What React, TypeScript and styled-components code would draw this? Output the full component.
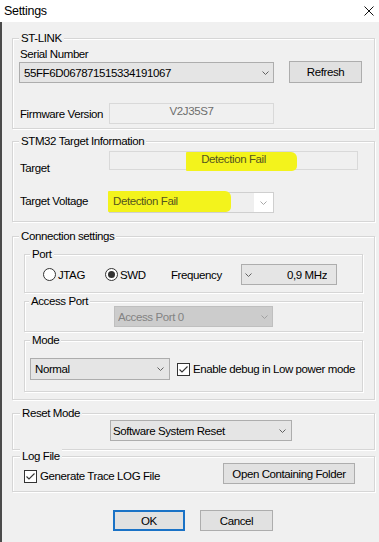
import React from "react";
import styled, { createGlobalStyle } from "styled-components";

const Global = createGlobalStyle`
  html, body { margin: 0; padding: 0; background: #f0f0f0; }
  body {
    font-family: "Liberation Sans", Arial, sans-serif;
    font-size: 11.5px;
    letter-spacing: -0.4px;
    color: #000;
  }
  * { box-sizing: border-box; }
`;

const Window = styled.div`
  width: 379px;
  height: 542px;
  background: #f0f0f0;
  display: flex;
  flex-direction: column;
  overflow: hidden;
`;

const TitleBar = styled.div`
  height: 22px;
  flex: none;
  background: #fff;
  display: flex;
  align-items: center;
  justify-content: space-between;
  padding: 0 5px 0 4px;
`;

const TitleText = styled.span`
  font-size: 12.5px;
  letter-spacing: -0.3px;
  line-height: 14px;
`;

const Body = styled.div`
  flex: 1;
  border-left: 2px solid #4b4b4b;
  padding-left: 10px;
  display: flex;
  flex-direction: column;
  align-items: flex-start;
`;

const Group = styled.div<{ $mt: number; $pl?: number; $pr?: number; $pb: number; $w?: number }>`
  margin-top: ${(p) => p.$mt}px;
  width: ${(p) => p.$w ?? 363}px;
  flex: none;
  border: 1px solid #d6d6d6;
  box-shadow: inset 1px 1px 0 #fff, 1px 1px 0 #fff;
  padding: 0 ${(p) => p.$pr ?? 0}px ${(p) => p.$pb}px ${(p) => p.$pl ?? 0}px;
  display: flex;
  flex-direction: column;
  align-items: flex-start;
`;

const Legend = styled.div<{ $ml: number }>`
  margin: -8px 0 0 ${(p) => p.$ml}px;
  padding: 0 2px;
  background: #f0f0f0;
  line-height: 14px;
  height: 14px;
  white-space: nowrap;
`;

const Row = styled.div<{ $mt?: number; $ml?: number; $align?: string; $stretch?: boolean }>`
  display: flex;
  align-items: ${(p) => p.$align ?? "flex-start"};
  margin-top: ${(p) => p.$mt ?? 0}px;
  margin-left: ${(p) => p.$ml ?? 0}px;
  align-self: ${(p) => (p.$stretch ? "stretch" : "auto")};
`;

const Label = styled.span<{ $w?: number; $mt?: number; $pl?: number }>`
  ${(p) => (p.$w ? `width: ${p.$w}px;` : "")}
  margin-top: ${(p) => p.$mt ?? 0}px;
  padding-left: ${(p) => p.$pl ?? 0}px;
  line-height: 14px;
  height: 14px;
  white-space: nowrap;
  flex: none;
`;

const Combo = styled.div<{
  $w: number;
  $h: number;
  $mt?: number;
  $ml?: number;
  $pl?: number;
  $pr?: number;
  $disabled?: boolean;
}>`
  width: ${(p) => p.$w}px;
  height: ${(p) => p.$h}px;
  margin-top: ${(p) => p.$mt ?? 0}px;
  margin-left: ${(p) => p.$ml ?? 0}px;
  flex: none;
  display: flex;
  align-items: center;
  padding: 0 ${(p) => p.$pr ?? 4}px 0 ${(p) => p.$pl ?? 4}px;
  background: ${(p) => (p.$disabled ? "#cccccc" : "#e5e5e5")};
  border: 1px solid ${(p) => (p.$disabled ? "#bfbfbf" : "#adadad")};
  color: ${(p) => (p.$disabled ? "#838383" : "#000")};
`;

const ComboText = styled.span<{ $right?: boolean }>`
  flex: 1;
  white-space: nowrap;
  overflow: hidden;
  line-height: 14px;
  text-align: ${(p) => (p.$right ? "right" : "left")};
`;

const ChevronSvg = styled.svg`
  flex: none;
  display: block;
`;

const Chevron = ({ color = "#606060" }: { color?: string }) => (
  <ChevronSvg width="7" height="4" viewBox="0 0 7 4">
    <polyline points="0.5,0.5 3.5,3.5 6.5,0.5" fill="none" stroke={color} strokeWidth="1" />
  </ChevronSvg>
);

const Button = styled.button<{ $w: number; $h: number; $ml?: number | "auto"; $default?: boolean }>`
  width: ${(p) => p.$w}px;
  height: ${(p) => p.$h}px;
  margin-left: ${(p) => (p.$ml === "auto" ? "auto" : `${p.$ml ?? 0}px`)};
  flex: none;
  font: inherit;
  letter-spacing: inherit;
  line-height: 14px;
  color: #000;
  background: #e1e1e1;
  border: ${(p) => (p.$default ? "2px solid #1a72c6" : "1px solid #adadad")};
  padding: 0;
  border-radius: 0;
`;

const Field = styled.div<{ $w: number; $h: number }>`
  position: relative;
  width: ${(p) => p.$w}px;
  height: ${(p) => p.$h}px;
  flex: none;
  border: 1px solid #d9d9d9;
  background: #f0f0f0;
  color: #6d6d6d;
  display: flex;
  align-items: flex-start;
  justify-content: center;
  line-height: 14px;
`;

const FieldText = styled.span<{ $marked?: boolean }>`
  position: relative;
  z-index: 1;
  white-space: nowrap;
  color: ${(p) => (p.$marked ? "#55551f" : "#6d6d6d")};
`;

const Marker = styled.span<{ $left: number; $top: number; $w: number; $h: number }>`
  position: absolute;
  left: ${(p) => p.$left}px;
  top: ${(p) => p.$top}px;
  width: ${(p) => p.$w}px;
  height: ${(p) => p.$h}px;
  background: #f3f31c;
  border-radius: 1px 6px 5px 1px;
  padding: 3px 0 0 5px;
  line-height: 14px;
  color: #55551f;
  white-space: nowrap;
  z-index: 1;
`;

const EditCombo = styled.div`
  position: relative;
  width: 165px;
  height: 21px;
  flex: none;
  border: 1px solid #cfcfcf;
  background: #fff;
  display: flex;
`;

const EditArea = styled.div`
  flex: 1;
  background: #efefef;
`;

const DropArea = styled.div`
  width: 19px;
  display: flex;
  align-items: center;
  justify-content: center;
  background: #fff;
`;

const RadioItem = styled.label<{ $w: number }>`
  width: ${(p) => p.$w}px;
  flex: none;
  display: flex;
  align-items: center;
  gap: 2px;
  line-height: 14px;
  white-space: nowrap;
`;

const RadioCircle = styled.span<{ $checked?: boolean }>`
  width: 13px;
  height: 13px;
  flex: none;
  border-radius: 50%;
  border: 1px solid #333;
  background: #fff;
  display: flex;
  align-items: center;
  justify-content: center;
  &::after {
    content: "";
    width: 7px;
    height: 7px;
    border-radius: 50%;
    background: #333;
    display: ${(p) => (p.$checked ? "block" : "none")};
  }
`;

const CheckItem = styled.label<{ $ml?: number; $mt?: number }>`
  margin-left: ${(p) => p.$ml ?? 0}px;
  margin-top: ${(p) => p.$mt ?? 0}px;
  flex: none;
  display: flex;
  align-items: center;
  gap: 3px;
  height: 14px;
  line-height: 14px;
  white-space: nowrap;
`;

const CheckBox = styled.span`
  width: 13px;
  height: 13px;
  flex: none;
  border: 1px solid #333;
  background: #fff;
  display: flex;
  align-items: center;
  justify-content: center;
`;

const CheckMark = () => (
  <svg width="11" height="11" viewBox="0 0 11 11">
    <polyline points="1.5,5.5 4,8 9.5,2.5" fill="none" stroke="#333" strokeWidth="1.1" />
  </svg>
);

const CloseIcon = () => (
  <svg width="10" height="10" viewBox="0 0 10 10">
    <line x1="0.5" y1="0.5" x2="9.5" y2="9.5" stroke="#111" strokeWidth="1" />
    <line x1="9.5" y1="0.5" x2="0.5" y2="9.5" stroke="#111" strokeWidth="1" />
  </svg>
);

export default function App() {
  return (
    <>
      <Global />
      <Window>
        <TitleBar>
          <TitleText>Settings</TitleText>
          <CloseIcon />
        </TitleBar>
        <Body>
          <Group $mt={16} $pl={6} $pb={4}>
            <Legend $ml={0}>ST-LINK</Legend>
            <Label $mt={2} $pl={1}>
              Serial Number
            </Label>
            <Row>
              <Combo $w={255} $h={21} $mt={1}>
                <ComboText>55FF6D067871515334191067</ComboText>
                <Chevron />
              </Combo>
              <Button $w={73} $h={22} $ml={15}>
                Refresh
              </Button>
            </Row>
            <Row $mt={20} $align="center">
              <Label $w={90} $pl={1}>
                Firmware Version
              </Label>
              <Field $w={165} $h={21}>
                <FieldText>V2J35S7</FieldText>
              </Field>
            </Row>
          </Group>

          <Group $mt={12} $pl={6} $pb={8}>
            <Legend $ml={0}>STM32 Target Information</Legend>
            <Row $mt={3}>
              <Label $w={90} $pl={1} $mt={10}>
                Target
              </Label>
              <Field $w={249} $h={19}>
                <Marker $left={76} $top={0} $w={111} $h={19} />
                <FieldText $marked>Detection Fail</FieldText>
              </Field>
            </Row>
            <Row $mt={17}>
              <Label $w={90} $pl={1} $mt={2}>
                Target Voltage
              </Label>
              <EditCombo>
                <EditArea />
                <DropArea>
                  <Chevron color="#a8a8a8" />
                </DropArea>
                <Marker $left={-2} $top={-2} $w={123} $h={21}>
                  Detection Fail
                </Marker>
              </EditCombo>
            </Row>
          </Group>

          <Group $mt={14} $pl={11} $pr={11} $pb={7}>
            <Legend $ml={-5}>Connection settings</Legend>
            <Group $mt={11} $w={339} $pb={7}>
              <Legend $ml={5}>Port</Legend>
              <Row $mt={3} $ml={18} $align="center">
                <RadioItem $w={62}>
                  <RadioCircle />
                  JTAG
                </RadioItem>
                <RadioItem $w={66}>
                  <RadioCircle $checked />
                  SWD
                </RadioItem>
                <Label $w={70}>Frequency</Label>
                <Combo $w={96} $h={21} $pl={3} $pr={9}>
                  <Chevron />
                  <ComboText $right>0,9 MHz</ComboText>
                </Combo>
              </Row>
            </Group>
            <Group $mt={8} $w={339} $pb={4}>
              <Legend $ml={4}>Access Port</Legend>
              <Combo $w={159} $h={21} $mt={-2} $ml={89} $pl={3} $disabled>
                <ComboText>Access Port 0</ComboText>
                <Chevron color="#a0a0a0" />
              </Combo>
            </Group>
            <Group $mt={8} $w={339} $pb={11}>
              <Legend $ml={5}>Mode</Legend>
              <Row $mt={11} $ml={5} $align="center">
                <Combo $w={140} $h={22} $pr={5}>
                  <ComboText>Normal</ComboText>
                  <Chevron />
                </Combo>
                <CheckItem $ml={7}>
                  <CheckBox>
                    <CheckMark />
                  </CheckBox>
                  Enable debug in Low power mode
                </CheckItem>
              </Row>
            </Group>
          </Group>

          <Group $mt={13} $pb={8}>
            <Legend $ml={7}>Reset Mode</Legend>
            <Combo $w={182} $h={21} $ml={97} $pl={2} $pr={5}>
              <ComboText>Software System Reset</ComboText>
              <Chevron />
            </Combo>
          </Group>

          <Group $mt={6} $pb={7} $pr={19}>
            <Legend $ml={7}>Log File</Legend>
            <Row $stretch>
              <CheckItem $ml={11} $mt={6}>
                <CheckBox>
                  <CheckMark />
                </CheckBox>
                Generate Trace LOG File
              </CheckItem>
              <Button $w={132} $h={21} $ml="auto">
                Open Containing Folder
              </Button>
            </Row>
          </Group>

          <Row $mt={18} $ml={101}>
            <Button $w={72} $h={21} $default>
              OK
            </Button>
            <Button $w={73} $h={21} $ml={15}>
              Cancel
            </Button>
          </Row>
        </Body>
      </Window>
    </>
  );
}
